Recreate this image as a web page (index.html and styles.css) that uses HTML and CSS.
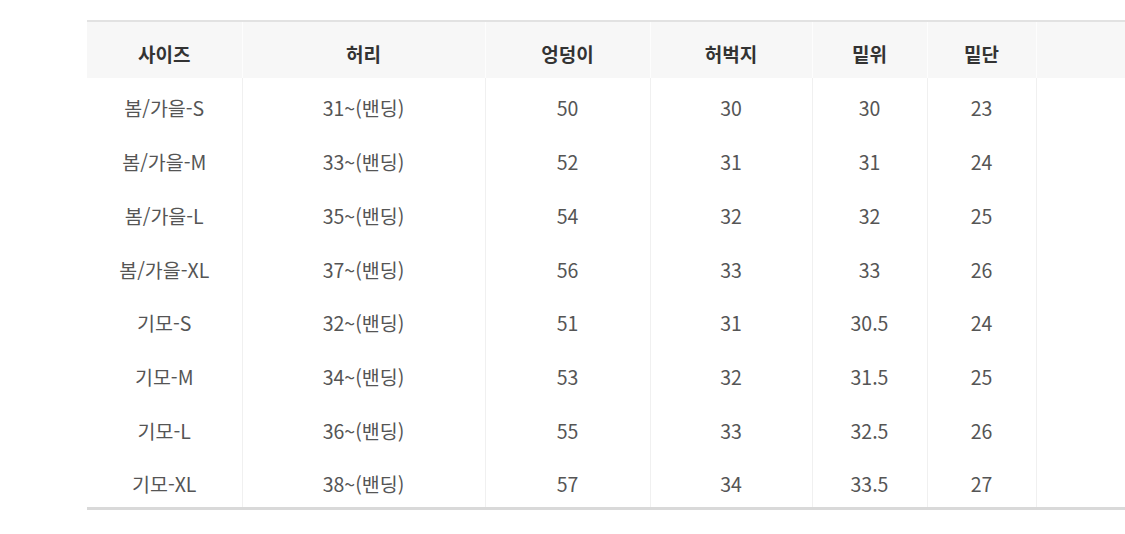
FILE: index.html
```html
<!DOCTYPE html>
<html lang="ko">
<head>
<meta charset="utf-8">
<link rel="stylesheet" href="styles.css">
</head>
<body>
<div class="wrap">
<table class="size">
<colgroup>
<col class="c1"><col class="c2"><col class="c3"><col class="c4"><col class="c5"><col class="c6"><col class="c7">
</colgroup>
<thead>
<tr><th>사이즈</th><th>허리</th><th>엉덩이</th><th>허벅지</th><th>밑위</th><th>밑단</th><th></th></tr>
</thead>
<tbody>
<tr><td>봄/가을-S</td><td>31~(밴딩)</td><td>50</td><td>30</td><td>30</td><td>23</td><td></td></tr>
<tr><td>봄/가을-M</td><td>33~(밴딩)</td><td>52</td><td>31</td><td>31</td><td>24</td><td></td></tr>
<tr><td>봄/가을-L</td><td>35~(밴딩)</td><td>54</td><td>32</td><td>32</td><td>25</td><td></td></tr>
<tr><td>봄/가을-XL</td><td>37~(밴딩)</td><td>56</td><td>33</td><td>33</td><td>26</td><td></td></tr>
<tr><td>기모-S</td><td>32~(밴딩)</td><td>51</td><td>31</td><td>30.5</td><td>24</td><td></td></tr>
<tr><td>기모-M</td><td>34~(밴딩)</td><td>53</td><td>32</td><td>31.5</td><td>25</td><td></td></tr>
<tr><td>기모-L</td><td>36~(밴딩)</td><td>55</td><td>33</td><td>32.5</td><td>26</td><td></td></tr>
<tr><td>기모-XL</td><td>38~(밴딩)</td><td>57</td><td>34</td><td>33.5</td><td>27</td><td></td></tr>
</tbody>
</table>
</div>
</body>
</html>
```
FILE: styles.css
```css
html, body {
  margin: 0;
  padding: 0;
  background: #fff;
  overflow: hidden;
}
.wrap {
  padding: 20px 0 0 87px;
  width: 1200px;
}
.size {
  border-collapse: collapse;
  table-layout: fixed;
  width: 1060px;
  font-family: "Noto Sans CJK KR", "Noto Sans", sans-serif;
  font-size: 19.5px;
  color: #555;
  border-top: 2px solid #e2e2e2;
  border-bottom: 3px solid #d9d9d9;
}
.c1 { width: 155px; }
.c2 { width: 243px; }
.c3 { width: 165px; }
.c4 { width: 162px; }
.c5 { width: 115px; }
.c6 { width: 109px; }
.c7 { width: 111px; }
.size th {
  height: 57px;
  padding: 6px 0 0;
  box-sizing: border-box;
  background: #f7f7f7;
  color: #333;
  font-weight: 700;
  font-size: 19px;
  border-left: 1px solid #fdfdfd;
  text-align: center;
  vertical-align: middle;
}
.size td {
  height: 53.75px;
  padding: 6px 0 0;
  box-sizing: border-box;
  text-align: center;
  vertical-align: middle;
  border-left: 1px solid #f0f0f0;
}
.size th:first-child, .size td:first-child {
  border-left: none;
}
```
